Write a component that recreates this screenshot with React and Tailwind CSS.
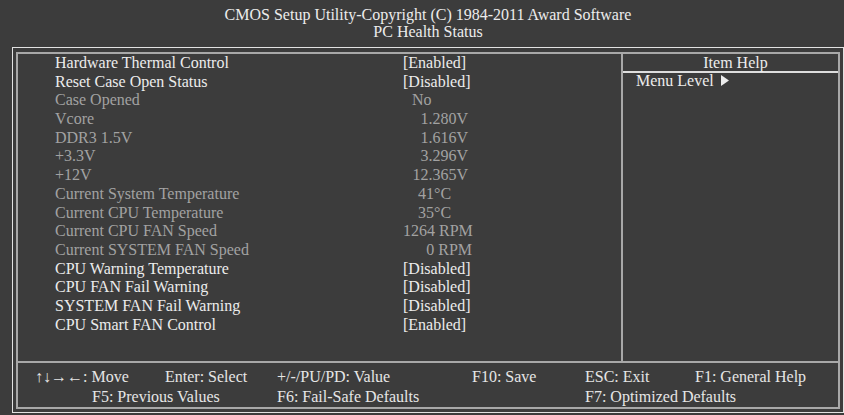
const rows = [
  { label: 'Hardware Thermal Control', value: '[Enabled]', on: true },
  { label: 'Reset Case Open Status', value: '[Disabled]', on: true },
  { label: 'Case Opened', value: 'No', cls: 'pl-[9px]' },
  { label: 'Vcore', value: '1.280V', cls: 'w-[65px] text-right' },
  { label: 'DDR3 1.5V', value: '1.616V', cls: 'w-[65px] text-right' },
  { label: '+3.3V', value: '3.296V', cls: 'w-[65px] text-right' },
  { label: '+12V', value: '12.365V', cls: 'w-[65px] text-right' },
  { label: 'Current System Temperature', value: '41°C', cls: 'pl-[15px]' },
  { label: 'Current CPU Temperature', value: '35°C', cls: 'pl-[15px]' },
  { label: 'Current CPU FAN Speed', value: '1264 RPM', cls: 'w-[69px] text-right' },
  { label: 'Current SYSTEM FAN Speed', value: '0 RPM', cls: 'w-[69px] text-right' },
  { label: 'CPU Warning Temperature', value: '[Disabled]', on: true },
  { label: 'CPU FAN Fail Warning', value: '[Disabled]', on: true },
  { label: 'SYSTEM FAN Fail Warning', value: '[Disabled]', on: true },
  { label: 'CPU Smart FAN Control', value: '[Enabled]', on: true },
];

function Row({ label, value, on, cls = '' }) {
  return (
    <div className={`flex h-[18.7px] items-center pl-[37px] leading-[18.7px] ${on ? 'text-[#ececec]' : 'text-[#a2a2a2]'}`}>
      <span className="w-[348px] whitespace-nowrap">{label}</span>
      <span className={`whitespace-nowrap ${cls}`}>{value}</span>
    </div>
  );
}

export default function App() {
  return (
    <div className="h-[415px] w-[844px] overflow-hidden bg-[#3c3c3c] font-['Liberation_Serif',serif] text-[16px] text-[#ececec]">
      <div className="h-[47px] pt-[6px] text-center leading-[17px] pl-[12px]">
        <div>CMOS Setup Utility-Copyright (C) 1984-2011 Award Software</div>
        <div>PC Health Status</div>
      </div>

      <div className="ml-[12px] h-[366px] w-[832px] border border-[#e2e2e2] px-[3px] pb-[3px] pt-[4px]">
        <div className="flex h-full flex-col border-2 border-[#a8a8a8]">
          <div className="flex h-[307px]">
            <div className="w-[603px]">
              {rows.map((r) => (
                <Row key={r.label} {...r} />
              ))}
            </div>
            <div className="w-[2px] bg-[#a8a8a8]" />
            <div className="flex-1">
              <div className="h-[17px] pl-[10px] text-center leading-[17px]">Item Help</div>
              <div className="h-[2px] bg-[#dedede]" />
              <div className="flex items-center pl-[13px] leading-[15px]">
                <span>Menu Level</span>
                <svg className="ml-[6px]" width="10" height="11" viewBox="0 0 10 11">
                  <polygon points="1,0 9,5.5 1,11" fill="#ececec" />
                </svg>
              </div>
            </div>
          </div>
          <div className="h-[2px] bg-[#a8a8a8]" />
          <div className="flex-1 pt-[4px] leading-[20px] text-[#e6e6e6]">
            <div className="flex whitespace-nowrap pl-[17px]">
              <span className="w-[130px]">↑↓→←: Move</span>
              <span className="w-[112px]">Enter: Select</span>
              <span className="w-[195px]">+/-/PU/PD: Value</span>
              <span className="w-[113px]">F10: Save</span>
              <span className="w-[110px]">ESC: Exit</span>
              <span>F1: General Help</span>
            </div>
            <div className="flex whitespace-nowrap pl-[74px]">
              <span className="w-[185px]">F5: Previous Values</span>
              <span className="w-[308px]">F6: Fail-Safe Defaults</span>
              <span>F7: Optimized Defaults</span>
            </div>
          </div>
        </div>
      </div>
    </div>
  );
}
